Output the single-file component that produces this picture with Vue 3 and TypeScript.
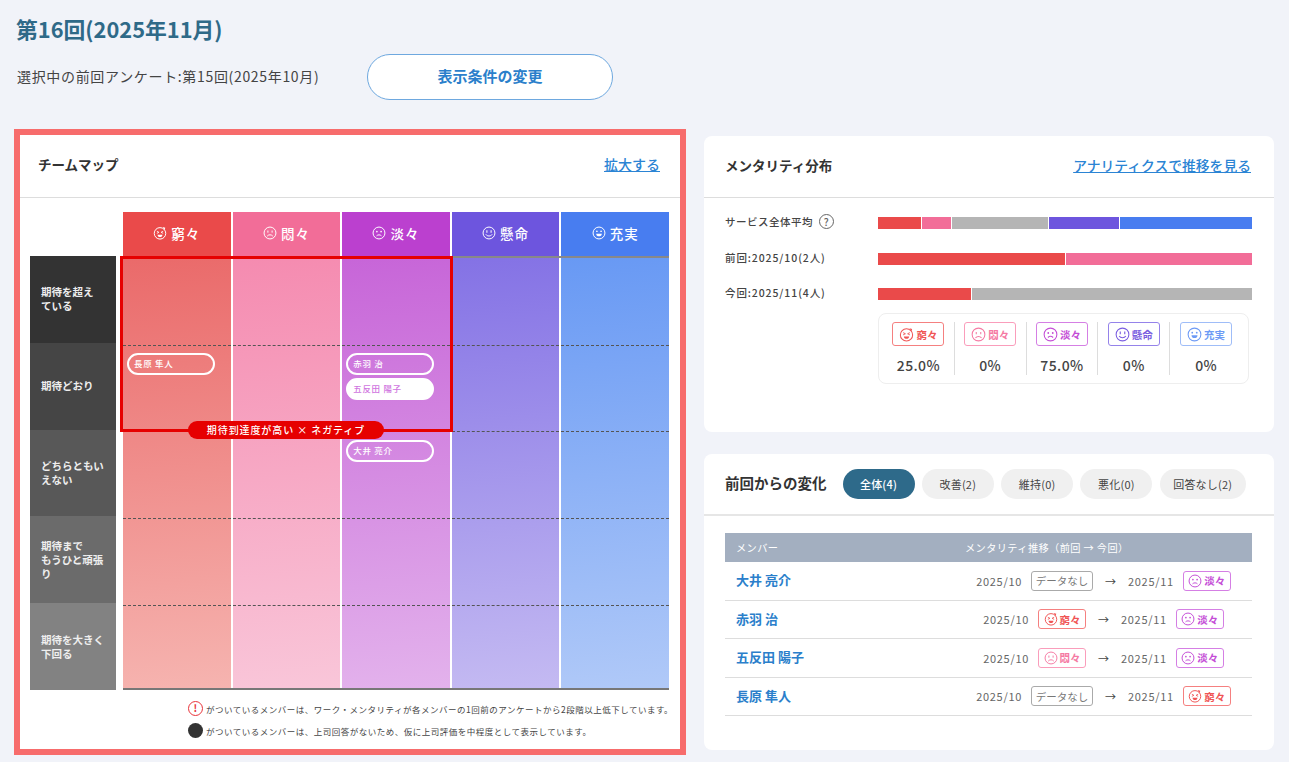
<script setup lang="ts">
type Mood = 'kyu' | 'mon' | 'tan' | 'ken' | 'juu'

const moods: { id: Mood; label: string }[] = [
  { id: 'kyu', label: '窮々' },
  { id: 'mon', label: '悶々' },
  { id: 'tan', label: '淡々' },
  { id: 'ken', label: '懸命' },
  { id: 'juu', label: '充実' },
]

const moodLabel = (id: Mood) => moods.find((m) => m.id === id)?.label ?? ''

const rowLabels = [
  ['期待を超え', 'ている'],
  ['期待どおり'],
  ['どちらともい', 'えない'],
  ['期待まで', 'もうひと頑張', 'り'],
  ['期待を大きく', '下回る'],
]

// 列ごと・行ごとのメンバー配置
const pins: Record<string, { name: string; filled?: boolean }[]> = {
  'kyu-1': [{ name: '長原 隼人' }],
  'tan-1': [{ name: '赤羽 治' }, { name: '五反田 陽子', filled: true }],
  'tan-2': [{ name: '大井 亮介' }],
}

const bars: { label: string; help?: boolean; segs: { mood: string; pct: number }[] }[] = [
  {
    label: 'サービス全体平均',
    help: true,
    segs: [
      { mood: 'kyu', pct: 11.6 },
      { mood: 'mon', pct: 7.9 },
      { mood: 'tan', pct: 25.9 },
      { mood: 'ken', pct: 18.9 },
      { mood: 'juu', pct: 35.7 },
    ],
  },
  { label: '前回:2025/10(2人)', segs: [{ mood: 'kyu', pct: 50 }, { mood: 'mon', pct: 50 }] },
  { label: '今回:2025/11(4人)', segs: [{ mood: 'kyu', pct: 25 }, { mood: 'tan', pct: 75 }] },
]

const summary: { id: Mood; value: string }[] = [
  { id: 'kyu', value: '25.0%' },
  { id: 'mon', value: '0%' },
  { id: 'tan', value: '75.0%' },
  { id: 'ken', value: '0%' },
  { id: 'juu', value: '0%' },
]

const tabs = ['全体(4)', '改善(2)', '維持(0)', '悪化(0)', '回答なし(2)']

const members: { name: string; prev: Mood | null; next: Mood }[] = [
  { name: '大井 亮介', prev: null, next: 'tan' },
  { name: '赤羽 治', prev: 'kyu', next: 'tan' },
  { name: '五反田 陽子', prev: 'mon', next: 'tan' },
  { name: '長原 隼人', prev: null, next: 'kyu' },
]
</script>

<template>
  <div class="page">
    <svg class="defs" aria-hidden="true">
      <symbol id="face-kyu" viewBox="0 0 20 20">
        <circle cx="10" cy="10.5" r="8.2" fill="none" stroke="currentColor" stroke-width="1.4" />
        <path d="M14 1.5l3.5 1-1 3.5" fill="currentColor" />
        <path d="M5.500 7.500l3 1.500-3 1.500M14.500 7.500l-3 1.500 3 1.500" fill="none" stroke="currentColor" stroke-width="1.2" />
        <path d="M6.500 12.500h7c0 2.200-1.600 3.300-3.500 3.300s-3.500-1.100-3.500-3.300z" fill="currentColor" />
      </symbol>
      <symbol id="face-mon" viewBox="0 0 20 20">
        <circle cx="10" cy="10" r="8.500" fill="none" stroke="currentColor" stroke-width="1.4" />
        <path d="M7 6.500v3M13 6.500v3" stroke="currentColor" stroke-width="1.400" />
        <path d="M6 14.500c2-2.600 6-2.600 8 0" fill="none" stroke="currentColor" stroke-width="1.400" />
      </symbol>
      <symbol id="face-tan" viewBox="0 0 20 20">
        <circle cx="10" cy="10" r="8.500" fill="none" stroke="currentColor" stroke-width="1.4" />
        <circle cx="7" cy="8" r="1.200" fill="currentColor" />
        <circle cx="13" cy="8" r="1.200" fill="currentColor" />
        <path d="M6.500 14c2-1.800 5-1.800 7 0" fill="none" stroke="currentColor" stroke-width="1.400" />
      </symbol>
      <symbol id="face-ken" viewBox="0 0 20 20">
        <circle cx="10" cy="10" r="8.500" fill="none" stroke="currentColor" stroke-width="1.4" />
        <path d="M7 6v3.500M13 6v3.500" stroke="currentColor" stroke-width="1.500" />
        <path d="M5.500 12c2 3 7 3 9 0" fill="none" stroke="currentColor" stroke-width="1.400" />
      </symbol>
      <symbol id="face-juu" viewBox="0 0 20 20">
        <circle cx="10" cy="10" r="8.500" fill="none" stroke="currentColor" stroke-width="1.4" />
        <circle cx="7" cy="7.500" r="1.200" fill="currentColor" />
        <circle cx="13" cy="7.500" r="1.200" fill="currentColor" />
        <path d="M6 11h8c0 2.500-1.800 3.800-4 3.800s-4-1.300-4-3.800z" fill="currentColor" />
      </symbol>
    </svg>

    <h1 class="title">第16回(2025年11月)</h1>
    <div class="condition">
      <p class="condition-text">選択中の前回アンケート:第15回(2025年10月)</p>
      <button class="condition-btn" type="button">表示条件の変更</button>
    </div>

    <div class="columns">
      <section class="map-card">
        <header class="card-head">
          <h2>チームマップ</h2>
          <a class="link">拡大する</a>
        </header>
        <div class="map-body">
          <div class="map-grid">
            <div></div>
            <div class="map-heads">
              <div v-for="m in moods" :key="m.id" class="map-head" :class="'head-' + m.id">
                <svg class="head-face"><use :href="'#face-' + m.id" /></svg>
                <span>{{ m.label }}</span>
              </div>
            </div>
            <div class="row-labels">
              <div v-for="(r, i) in rowLabels" :key="i" class="row-label" :class="'row-' + i">
                <span v-for="line in r" :key="line">{{ line }}</span>
              </div>
            </div>
            <div class="board">
              <div v-for="m in moods" :key="m.id" class="board-col" :class="'col-' + m.id">
                <div v-for="(r, i) in rowLabels" :key="i" class="cell">
                  <div
                    v-for="p in pins[m.id + '-' + i] ?? []"
                    :key="p.name"
                    class="pin"
                    :class="{ filled: p.filled }"
                  >
                    {{ p.name }}
                  </div>
                </div>
              </div>
              <div class="highlight">
                <div class="highlight-tag">期待到達度が高い × ネガティブ</div>
              </div>
            </div>
          </div>
          <div class="legend">
            <p class="legend-row">
              <span class="legend-alert">!</span>
              がついているメンバーは、ワーク・メンタリティが各メンバーの1回前のアンケートから2段階以上低下しています。
            </p>
            <p class="legend-row">
              <span class="legend-dot"></span>
              がついているメンバーは、上司回答がないため、仮に上司評価を中程度として表示しています。
            </p>
          </div>
        </div>
      </section>

      <div class="side">
        <section class="card dist-card">
          <header class="card-head">
            <h2>メンタリティ分布</h2>
            <a class="link">アナリティクスで推移を見る</a>
          </header>
          <div class="dist-body">
            <div v-for="b in bars" :key="b.label" class="bar-row">
              <div class="bar-label" :class="{ dated: !b.help }">
                {{ b.label }}
                <span v-if="b.help" class="help">?</span>
              </div>
              <div class="bar">
                <div
                  v-for="s in b.segs"
                  :key="s.mood"
                  class="seg"
                  :class="'seg-' + s.mood"
                  :style="{ width: s.pct + '%' }"
                ></div>
              </div>
            </div>
            <div class="summary">
              <div v-for="s in summary" :key="s.id" class="summary-item">
                <span class="badge large" :class="'badge-' + s.id">
                  <svg class="badge-face"><use :href="'#face-' + s.id" /></svg>
                  {{ moodLabel(s.id) }}
                </span>
                <span class="summary-value">{{ s.value }}</span>
              </div>
            </div>
          </div>
        </section>

        <section class="card change-card">
          <header class="change-head">
            <h2>前回からの変化</h2>
            <div class="tabs">
              <button v-for="(t, i) in tabs" :key="t" class="tab" :class="{ active: i === 0 }" type="button">
                {{ t }}
              </button>
            </div>
          </header>
          <div class="table">
            <div class="table-head">
              <span class="th-member">メンバー</span>
              <span class="th-trend">メンタリティ推移（前回 → 今回）</span>
            </div>
            <div v-for="m in members" :key="m.name" class="table-row">
              <a class="member">{{ m.name }}</a>
              <div class="trend">
                <span class="date">2025/10</span>
                <span v-if="m.prev" class="badge" :class="'badge-' + m.prev">
                  <svg class="badge-face"><use :href="'#face-' + m.prev" /></svg>
                  {{ moodLabel(m.prev) }}
                </span>
                <span v-else class="badge badge-none">データなし</span>
                <span class="arrow">→</span>
                <span class="date">2025/11</span>
                <span class="badge" :class="'badge-' + m.next">
                  <svg class="badge-face"><use :href="'#face-' + m.next" /></svg>
                  {{ moodLabel(m.next) }}
                </span>
              </div>
            </div>
          </div>
        </section>
      </div>
    </div>
  </div>
</template>

<style>
html,
body {
  margin: 0;
  background: #f1f3f9;
}
</style>

<style scoped>
.page {
  box-sizing: border-box;
  width: 1289px;
  height: 762px;
  overflow: hidden;
  padding: 13px 15px 0 14px;
  background: #f1f3f9;
  color: #333;
  font-family: "Noto Sans CJK JP", "Noto Sans", sans-serif;
}
.defs {
  position: absolute;
  width: 0;
  height: 0;
}
.title {
  margin: 0 0 0 2px;
  height: 32px;
  font-size: 21.8px;
  line-height: 32px;
  font-weight: 700;
  color: #2f6a88;
}
.condition {
  display: flex;
  align-items: center;
  gap: 44px;
  margin: 9px 0 0 3px;
  height: 46px;
}
.condition-text {
  width: 306px;
  margin: 0 0 3px;
  font-size: 14px;
  color: #444;
  letter-spacing: 0.67px;
  white-space: nowrap;
}
.condition-btn {
  width: 246px;
  height: 46px;
  padding: 0 0 3px;
  border: 1px solid #6ea8df;
  border-radius: 23px;
  background: #fff;
  color: #2b7fcb;
  font-family: inherit;
  font-size: 15px;
  font-weight: 700;
}
.columns {
  display: flex;
  gap: 18px;
  margin-top: 29px;
}
.map-card {
  box-sizing: border-box;
  width: 672px;
  height: 626px;
  border: 6px solid #f76c6c;
  background: #fff;
}
.card-head {
  display: flex;
  align-items: center;
  justify-content: space-between;
  box-sizing: border-box;
  height: 62px;
  padding: 0 20px 0 18px;
  border-bottom: 1px solid #ddd;
}
.map-card .card-head {
  height: 63px;
}
.card-head h2,
.change-head h2 {
  margin: 0 0 4px;
  font-size: 13.5px;
  font-weight: 700;
  color: #333;
}
.change-head h2 {
  font-size: 14.5px;
}
.link {
  margin-bottom: 4px;
  font-size: 14px;
  font-weight: 500;
  color: #2b84d4;
  text-decoration: underline;
}
.dist-card .link {
  font-size: 13.8px;
}
.map-body {
  padding: 14px 11px 0 10px;
}
.map-grid {
  display: grid;
  grid-template-columns: 86px 546px;
  grid-template-rows: 44px 434px;
  column-gap: 7px;
}
.map-heads {
  display: grid;
  grid-template-columns: repeat(5, 1fr);
  gap: 2px;
}
.map-head {
  display: flex;
  align-items: center;
  justify-content: center;
  gap: 4px;
  padding-bottom: 3px;
  color: #fff;
  font-size: 13.5px;
  font-weight: 500;
  letter-spacing: 1px;
}
.head-face {
  width: 14px;
  height: 14px;
}
.head-kyu { background: #ea4a4a; }
.head-mon { background: #f26d98; }
.head-tan { background: #bb40cf; }
.head-ken { background: #6d55de; }
.head-juu { background: #487df0; }
.row-labels {
  display: flex;
  flex-direction: column;
}
.row-label {
  flex: 1;
  display: flex;
  flex-direction: column;
  justify-content: center;
  padding: 0 11px;
  color: #eee;
  font-size: 10.5px;
  line-height: 14px;
  font-weight: 700;
  white-space: nowrap;
}
.row-0 { background: #333; }
.row-1 { background: #454545; }
.row-2 { background: #585858; }
.row-3 { background: #6b6b6b; }
.row-4 { background: #828282; }
.board {
  position: relative;
  display: grid;
  grid-template-columns: repeat(5, 1fr);
  gap: 2px;
  box-sizing: border-box;
  border-top: 2px solid #888;
  border-bottom: 2px solid #777;
}
.board-col {
  display: grid;
  grid-template-rows: repeat(4, 86.7px) 1fr;
  padding-top: 1px;
}
.col-kyu { background: linear-gradient(175deg, #ea6a6a, #f6b4b0); }
.col-mon { background: linear-gradient(175deg, #f58bb0, #f9c6d9); }
.col-tan { background: linear-gradient(175deg, #c765d8, #e3b2ec); }
.col-ken { background: linear-gradient(175deg, #8472e5, #c4baf2); }
.col-juu { background: linear-gradient(175deg, #6899f4, #b0c9f8); }
.cell {
  display: flex;
  flex-direction: column;
  gap: 3px;
  box-sizing: border-box;
  padding: 7.7px 4px;
  border-bottom: 1px dashed #555;
}
.cell:last-child {
  border-bottom: 0;
}
.pin {
  box-sizing: border-box;
  width: 88px;
  height: 22px;
  padding-left: 5px;
  border: 2px solid #fff;
  border-radius: 11px;
  color: #fff;
  font-size: 8.5px;
  line-height: 17px;
  font-weight: 500;
  letter-spacing: 0.7px;
}
.pin.filled {
  background: #fff;
  color: #cf74e0;
}
.highlight {
  position: absolute;
  left: -3px;
  top: -2px;
  box-sizing: border-box;
  width: 333px;
  height: 176px;
  border: 3px solid #e60000;
}
.highlight-tag {
  position: absolute;
  left: 65px;
  bottom: -10px;
  width: 196px;
  height: 18px;
  border-radius: 9px;
  background: #e60000;
  color: #fff;
  font-size: 10px;
  line-height: 18px;
  font-weight: 500;
  letter-spacing: 0.9px;
  text-align: center;
}
.legend {
  display: flex;
  flex-direction: column;
  align-items: flex-start;
  gap: 7px;
  margin: 11px 0 0 158px;
}
.legend-row {
  display: flex;
  align-items: center;
  gap: 3px;
  height: 15px;
  margin: 0;
  font-size: 8.5px;
  color: #444;
  letter-spacing: 0.5px;
  white-space: nowrap;
}
.legend-alert {
  box-sizing: border-box;
  width: 15px;
  height: 15px;
  border: 1.5px solid #e8333a;
  border-radius: 50%;
  color: #e8333a;
  font-size: 10px;
  line-height: 12px;
  font-weight: 700;
  text-align: center;
}
.legend-dot {
  width: 15px;
  height: 15px;
  border-radius: 50%;
  background: #333;
}
.side {
  display: flex;
  flex-direction: column;
  gap: 22px;
  width: 570px;
  margin-top: 7px;
}
.card {
  box-sizing: border-box;
  height: 296px;
  border-radius: 8px;
  background: #fff;
}
.dist-card .card-head {
  padding: 0 23px 0 21px;
}
.dist-body {
  padding: 12px 22px 0 21px;
}
.bar-row {
  display: flex;
  align-items: center;
  height: 36px;
  margin-top: -5px;
  margin-bottom: 5px;
}
.bar-row + .bar-row {
  margin-top: -5.500px;
}
.bar-label {
  display: flex;
  align-items: center;
  gap: 4px;
  width: 153px;
  margin-bottom: 3px;
  font-size: 10.5px;
  font-weight: 500;
  color: #444;
  letter-spacing: 0.5px;
  white-space: nowrap;
}
.bar-label.dated {
  letter-spacing: 0.9px;
}
.help {
  box-sizing: border-box;
  width: 15px;
  height: 15px;
  margin-left: 2px;
  border: 1px solid #666;
  border-radius: 50%;
  color: #666;
  font-size: 10px;
  line-height: 13px;
  text-align: center;
}
.bar {
  display: flex;
  gap: 1px;
  width: 374px;
  height: 12px;
}
.seg {
  min-width: 0;
}
.seg-kyu { background: #ea4a4a; }
.seg-mon { background: #f26d98; }
.seg-tan { background: #b5b5b5; }
.seg-ken { background: #6d55de; }
.seg-juu { background: #487df0; }
.summary {
  display: grid;
  grid-template-columns: repeat(5, 1fr);
  box-sizing: border-box;
  width: 371px;
  height: 71px;
  margin: -4px 0 0 153px;
  padding: 8px 6px 8px 4px;
  border: 1px solid #eee;
  border-radius: 8px;
}
.summary-item {
  display: flex;
  flex-direction: column;
  align-items: center;
  justify-content: space-between;
  border-right: 1px solid #ddd;
}
.summary-item:last-child {
  border-right: 0;
}
.summary-value {
  font-size: 14px;
  font-weight: 500;
  line-height: 20px;
  letter-spacing: 0.4px;
  color: #444;
}
.badge {
  display: inline-flex;
  align-items: center;
  justify-content: center;
  gap: 2px;
  box-sizing: border-box;
  width: 48px;
  height: 20px;
  border: 1.5px solid;
  border-radius: 3px;
  background: #fff;
  font-size: 10.5px;
  font-weight: 700;
  white-space: nowrap;
}
.badge.large {
  width: 52px;
  height: 24px;
  font-size: 10.5px;
}
.badge-face {
  flex: none;
  width: 14px;
  height: 14px;
}
.badge.large .badge-face {
  width: 15px;
  height: 15px;
}
.badge-kyu { color: #f05555; border-color: #f58080; }
.badge-mon { color: #f57aa3; border-color: #fa9dbb; }
.badge-tan { color: #c44dd6; border-color: #d57fe4; }
.badge-ken { color: #7a5de0; border-color: #9583ea; }
.badge-juu { color: #6d9af5; border-color: #9fbdf8; }
.badge-none {
  width: 62px;
  color: #777;
  border-color: #aaa;
  font-size: 10.5px;
  font-weight: 400;
}
.change-head {
  display: flex;
  align-items: center;
  box-sizing: border-box;
  height: 62px;
  padding: 0 0 0 21px;
  border-bottom: 2px solid #e6e6e6;
}
.tabs {
  display: flex;
  gap: 7.3px;
  margin-left: 16px;
}
.tab {
  box-sizing: border-box;
  width: 72px;
  height: 30px;
  padding: 0;
  border: 0;
  border-radius: 15px;
  background: #f0f0f0;
  color: #444;
  font-family: inherit;
  font-size: 11px;
  letter-spacing: 0.2px;
  white-space: nowrap;
}
.tab:last-child {
  width: 86px;
}
.tab.active {
  background: #2e6a8a;
  color: #fff;
  font-weight: 500;
}
.table {
  margin: 17px 22px 0 21px;
}
.table-head {
  display: flex;
  align-items: center;
  height: 29px;
  background: #a3afc0;
  color: #fff;
  font-size: 10.2px;
  letter-spacing: 0.4px;
}
.th-member {
  width: 230px;
  padding-left: 11px;
  box-sizing: border-box;
}
.th-trend {
  padding-left: 10px;
}
.table-row {
  display: flex;
  align-items: center;
  box-sizing: border-box;
  height: 38.500px;
  border-bottom: 1px solid #ddd;
}
.member {
  box-sizing: border-box;
  width: 230px;
  padding: 0 0 2px 11px;
  color: #2b7fcb;
  font-size: 13px;
  font-weight: 700;
}
.trend {
  flex: 1;
  display: flex;
  align-items: center;
  justify-content: center;
  gap: 9px;
}
.date {
  font-size: 11px;
  color: #666;
  letter-spacing: 0.7px;
}
.arrow {
  margin: 0 3px;
  font-size: 11px;
  color: #444;
}
</style>
